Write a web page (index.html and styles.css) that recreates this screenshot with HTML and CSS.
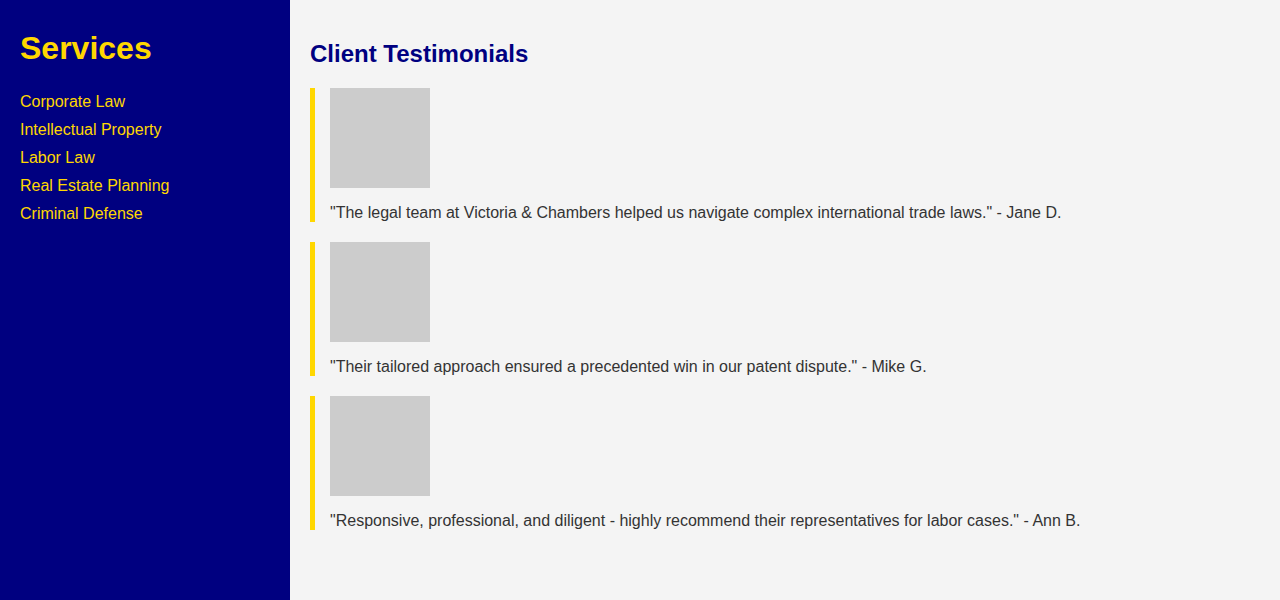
FILE: index.html
```html
<!DOCTYPE html>
<html lang="en">
<head>
<meta charset="utf-8">
<title>Victoria &amp; Chambers</title>
<link rel="stylesheet" href="styles.css">
</head>
<body>
<div class="layout">
  <aside class="sidebar">
    <h1 class="sidebar-title">Services</h1>
    <ul class="service-list">
      <li><a href="#">Corporate Law</a></li>
      <li><a href="#">Intellectual Property</a></li>
      <li><a href="#">Labor Law</a></li>
      <li><a href="#">Real Estate Planning</a></li>
      <li><a href="#">Criminal Defense</a></li>
    </ul>
  </aside>
  <main class="main">
    <h2 class="section-title">Client Testimonials</h2>
    <div class="testimonial">
      <div class="photo"></div>
      <p class="quote">"The legal team at Victoria &amp; Chambers helped us navigate complex international trade laws." - Jane D.</p>
    </div>
    <div class="testimonial">
      <div class="photo"></div>
      <p class="quote">"Their tailored approach ensured a precedented win in our patent dispute." - Mike G.</p>
    </div>
    <div class="testimonial">
      <div class="photo"></div>
      <p class="quote">"Responsive, professional, and diligent - highly recommend their representatives for labor cases." - Ann B.</p>
    </div>
  </main>
</div>
</body>
</html>
```

FILE: styles.css
```css
html, body {
  margin: 0;
  padding: 0;
  height: 100%;
}
body {
  font-family: "Liberation Sans", Arial, sans-serif;
}
.layout {
  display: flex;
  min-height: 100%;
}
.sidebar {
  width: 250px;
  flex: 0 0 250px;
  padding: 20px;
  background: #000080;
  color: #FFD700;
}
.sidebar-title {
  margin: 10px 0 21px;
  font-size: 32px;
  line-height: 37px;
  font-weight: bold;
  color: #FFD700;
}
.service-list {
  list-style: none;
  margin: 0;
  padding: 0;
}
.service-list li {
  padding: 5px 0;
  line-height: 18px;
  font-size: 16px;
}
.service-list a {
  color: #FFD700;
  text-decoration: none;
}
.main {
  flex: 1;
  padding: 20px;
  background: #f4f4f4;
}
.section-title {
  margin: 20px 0 20px;
  font-size: 24px;
  line-height: 28px;
  font-weight: bold;
  color: #000080;
}
.testimonial {
  border-left: 5px solid #FFD700;
  padding-left: 15px;
  margin-bottom: 20px;
}
.photo {
  width: 100px;
  height: 100px;
  background: #cccccc;
}
.quote {
  margin: 16px 0 0;
  font-size: 16px;
  line-height: 18px;
  color: #333333;
}
```
